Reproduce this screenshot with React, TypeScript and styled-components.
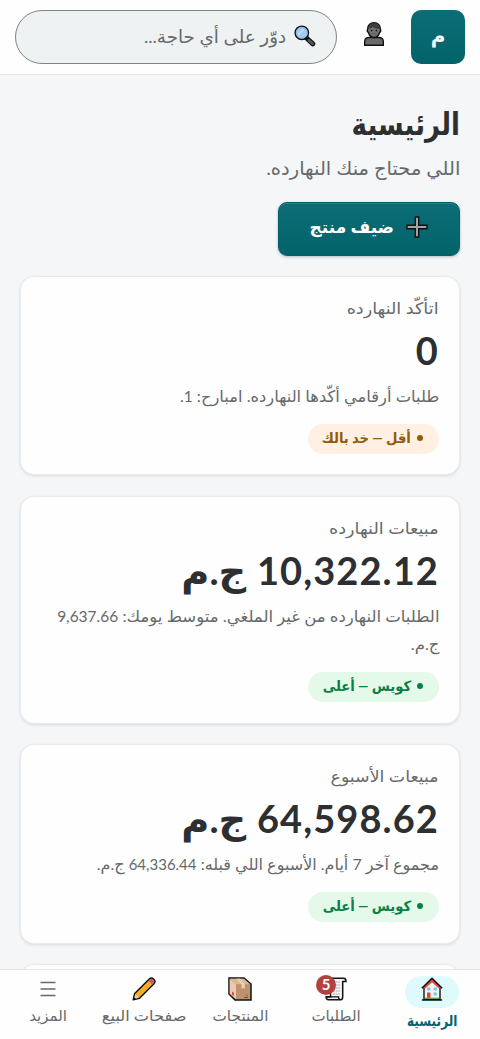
import React from "react";
import styled, { createGlobalStyle } from "styled-components";

const Global = createGlobalStyle`
  * { box-sizing: border-box; }
  html, body { margin: 0; height: 100%; overflow: hidden; }
  body { background: #f4f6f8; font-family: Lato, "DejaVu Sans", sans-serif; color: #2d2f31; }
  svg { flex: none; }
`;

const Page = styled.div`
  height: 1039px;
  display: flex;
  flex-direction: column;
  overflow: hidden;
  background: #f4f6f8;
`;

const Text = styled.span<{ $fit?: number; $origin?: string }>`
  display: inline-block;
  vertical-align: top;
  white-space: nowrap;
  transform: scaleX(${(p) => p.$fit ?? 1});
  transform-origin: ${(p) => p.$origin ?? "right"} center;
`;

const Header = styled.header`
  flex: none;
  height: 75px;
  padding: 10px 15px;
  display: flex;
  gap: 10px;
  background: #fefefe;
  border-bottom: 1px solid #e2e6e8;
`;

const Avatar = styled.div`
  width: 54px;
  height: 54px;
  padding-bottom: 3px;
  border-radius: 10px;
  display: grid;
  place-items: center;
  color: #fff;
  font-size: 20px;
  font-weight: 700;
  background: linear-gradient(#0c6d76, #03636b);
`;

const IconButton = styled.button`
  width: 54px;
  height: 54px;
  padding: 0 0 6px;
  border: 0;
  background: none;
  display: grid;
  place-items: center;
`;

const Search = styled.div`
  flex: 1;
  height: 54px;
  border: 1px solid #7f8485;
  border-radius: 27px;
  background: #eff2f2;
  padding: 0 20px 3px;
  display: flex;
  align-items: center;
  gap: 8px;
  color: #66696b;
  font-size: 18px;
`;

const Main = styled.main`
  flex: 1;
  min-height: 0;
  overflow: hidden;
  padding: 26px 20px 0;
  display: flex;
  flex-direction: column;
  align-items: flex-start;
`;

const Title = styled.h1`
  margin: 0;
  height: 44px;
  line-height: 44px;
  font-size: 31px;
  font-weight: 700;
`;

const Subtitle = styled.p`
  margin: 7px 0 0;
  height: 30px;
  line-height: 31px;
  font-size: 19px;
  color: #66696b;
`;

const AddButton = styled.button`
  flex: none;
  margin: 20px 0 20px;
  width: 182px;
  height: 54px;
  padding: 0 31px 5px;
  border: 1px solid #055f67;
  border-radius: 9px;
  display: flex;
  align-items: center;
  gap: 12px;
  color: #fff;
  font: 700 17px Lato, "DejaVu Sans", sans-serif;
  background: linear-gradient(#0c6d76, #03636b);
  box-shadow: 0 1px 3px rgba(20, 50, 80, 0.3), inset 0 1px 0 rgba(255, 255, 255, 0.13);
`;

const Cards = styled.div`
  width: 100%;
  display: flex;
  flex-direction: column;
  gap: 20.5px;
`;

const Card = styled.section<{ $height: number }>`
  flex: none;
  height: ${(p) => p.$height}px;
  padding: 17px 20px 0;
  border: 1px solid #e8ebed;
  border-radius: 14px;
  background: #fefefe;
  box-shadow: 0 1px 3px rgba(30, 40, 50, 0.12);
`;

const Label = styled.div`
  height: 28px;
  line-height: 28px;
  font-size: 16px;
  color: #66696b;
`;

const Value = styled.div`
  height: 60px;
  line-height: 57px;
  font-size: 38px;
  font-weight: 700;
  display: flex;
  gap: 10.5px;
`;

const Digits = styled.span`
  letter-spacing: 1.1px;
`;

const Detail = styled.div<{ $lines?: number }>`
  height: ${(p) => (p.$lines ?? 1) * 28.5}px;
  line-height: 28.5px;
  font-size: 16px;
  color: #66696b;
`;

const Num = styled.span`
  font-size: 15px;
  line-height: 1;
`;

const Badge = styled.div<{ $tone: "good" | "warn" }>`
  margin-top: 13px;
  width: 131px;
  height: 30px;
  border-radius: 15px;
  padding: 0 16px 3px;
  display: flex;
  align-items: center;
  gap: 6px;
  font-size: 14px;
  font-weight: 700;
  color: ${(p) => (p.$tone === "good" ? "#087f45" : "#925b05")};
  background: ${(p) => (p.$tone === "good" ? "#e5f9ea" : "#fff0e3")};
`;

const Dot = styled.i`
  flex: none;
  width: 6px;
  height: 6px;
  margin-top: 2px;
  border-radius: 50%;
  background: currentColor;
`;

const Nav = styled.nav`
  flex: none;
  height: 70px;
  display: grid;
  grid-template-columns: repeat(5, 96px);
  background: #fefefe;
  border-top: 1px solid #e2e5e7;
`;

const NavItem = styled.a<{ $active?: boolean }>`
  display: flex;
  flex-direction: column;
  align-items: center;
  padding-top: ${(p) => (p.$active ? 6 : 4)}px;
  line-height: 24px;
  font-size: 15px;
  font-weight: ${(p) => (p.$active ? 700 : 400)};
  color: ${(p) => (p.$active ? "#05636d" : "#66696b")};
`;

const NavIcon = styled.span<{ $active?: boolean }>`
  position: relative;
  width: 54px;
  height: ${(p) => (p.$active ? 32 : 29)}px;
  padding-bottom: ${(p) => (p.$active ? 6 : 0)}px;
  border-radius: 16px;
  display: grid;
  place-items: center;
  background: ${(p) => (p.$active ? "#dffafd" : "none")};
`;

const Count = styled.b`
  position: absolute;
  left: 7px;
  top: 1px;
  width: 20px;
  height: 20px;
  border-radius: 50%;
  background: #b1423e;
  color: #fff;
  font-size: 15px;
  line-height: 18px;
  text-align: center;
`;

const SearchIcon = () => (
  <svg width="22" height="22" viewBox="0 0 22 22">
    <path d="M12.500 13 18.800 18.800" stroke="#111" strokeWidth="5" strokeLinecap="round" />
    <path d="M14.800 15.200 18.600 18.700" stroke="#4f5d5d" strokeWidth="2.600" strokeLinecap="round" />
    <circle cx="7.800" cy="7.800" r="6.700" fill="#a3cbf5" stroke="#111" strokeWidth="1.400" />
    <circle cx="7.800" cy="7.800" r="5.400" fill="none" stroke="#7fb0e6" strokeWidth=".8" />
    <path d="M4.500 9.500 9.500 4.500" stroke="#c9e2fa" strokeWidth="1.500" />
  </svg>
);

const PersonIcon = () => (
  <svg width="22" height="26" viewBox="0 0 22 26">
    <path d="M1.700 24.300V20.500c0-2.600 1.800-4 4.500-4h9.600c2.700 0 4.500 1.400 4.500 4v3.800Z" fill="#6b6b6b" stroke="#111" strokeWidth="1.400" />
    <path d="M4.600 8C4.600 4.200 7.200 1.800 11 1.800s6.400 2.400 6.400 6.200c0 1 .7 1.400.2 2.400-.2.500-.8.600-1 1.100-.8 2.800-3 5-5.600 5s-4.800-2.200-5.600-5c-.2-.5-.8-.6-1-1.100-.5-1 .2-1.400.2-2.400Z" fill="#707070" stroke="#111" strokeWidth="1.400" />
    <path d="M5 7.800C5 4.400 7.600 2.500 11 2.500s6 1.900 6 5.300c-3 .3-5.400-.4-7.100-2C8.800 7 7 7.800 5 7.800Z" fill="#3d3d3d" />
    <circle cx="8.600" cy="9.600" r=".8" fill="#111" />
    <circle cx="13.400" cy="9.600" r=".8" fill="#111" />
    <path d="M9.500 13h3" stroke="#555" strokeWidth=".7" />
  </svg>
);

const PlusIcon = () => (
  <svg width="22" height="22" viewBox="0 0 22 22">
    <path d="M9.300 1h3.400v8.300H21v3.400h-8.300V21H9.300v-8.300H1V9.300h8.300Z" fill="#a5a3a2" stroke="#111" strokeWidth="1.400" />
  </svg>
);

const HouseIcon = () => (
  <svg width="22" height="24" viewBox="0 0 22 24">
    <path d="M3 10 11 3l8 7v12.500H3Z" fill="#f8f8f8" stroke="#111" strokeWidth="1.400" />
    <path d="M2.800 11 11 3.600l8.200 7.400" fill="none" stroke="#de4a35" strokeWidth="2.600" />
    <path d="M.8 11.300 11 1.200l10.200 10.100" fill="none" stroke="#111" strokeWidth="1.500" />
    <path d="M6 10.500h3.500v3H6Zm6.500 0H16v3h-3.500Zm0 5H16v3h-3.500Z" fill="#7bc9ee" />
    <path d="M6 15.500h3.500v6.500H6Z" fill="#e24335" />
    <path d="M3.700 21.300h14.600" stroke="#58a946" strokeWidth="1.400" />
    <path d="M.8 23h20.400" stroke="#111" strokeWidth="1.400" />
  </svg>
);

const OrdersIcon = () => (
  <svg width="22" height="24" viewBox="0 0 22 24">
    <path d="M5.500 1.200h13.300c1.600 0 2.200 1 2.200 3.300h-3.300v15.300c0 2-.7 3-2 3H3.700c-1.800 0-2.600-1-2.600-3h4.400Z" fill="#f3f3f3" stroke="#111" strokeWidth="1.500" />
    <path d="M1.500 19.800h12c0 1.800.6 2.800 1.800 2.800" fill="none" stroke="#111" strokeWidth="1.300" />
    <path d="M8 5h7M8 8h7m-7 3h7m-7 3h7m-7 3h7" stroke="#a7a9ad" strokeDasharray="2 .7" />
  </svg>
);

const BoxIcon = () => (
  <svg width="24" height="24" viewBox="0 0 24 24">
    <path d="M1 1h15l7 6v16H7l-6-6Z" fill="#c39a76" stroke="#111" strokeWidth="1.500" />
    <path d="M1.700 1.700h14l6.300 5.600H8Z" fill="#dcb896" />
    <path d="M1.700 2 8 7.600v14.100l-6.300-5Z" fill="#e9cbb4" />
    <path d="M8 7.500h14V22H8Z" fill="#bd926c" />
    <path d="m8.500 1.700 5 5.600v4.500l1.700-.8 1.600.8V7.300L12 1.700Z" fill="#ecd0b0" />
    <path d="m4 14.500 2 1.500v3l-2-1.500Z" fill="#e33f4f" />
    <path d="M16 20.500h4m-2-3 1.500 1.500" stroke="#684f3b" />
  </svg>
);

const PencilIcon = () => (
  <svg width="24" height="24" viewBox="0 0 24 24">
    <path d="M1.200 22.800 2.700 16.500 17.300 2c1.500-1.500 3-1.300 4.500.2s1.600 3 .2 4.500L7.500 21.200Z" fill="#f5ae22" stroke="#111" strokeWidth="1.500" strokeLinejoin="round" />
    <path d="m16.600 3.900 1.500-1.400c1.100-1 2-.8 3.100.3s1.300 2.100.3 3.100l-1.400 1.500Z" fill="#d2557f" />
    <path d="m3.300 17 3.700 3.700-4.900 1.300Z" fill="#ead1ae" />
    <path d="m1.200 22.800.7-2.800 2.100 2.100Z" fill="#111" />
  </svg>
);

const MenuIcon = () => (
  <svg width="18" height="18" viewBox="0 0 18 18">
    <path d="M1.500 2.500h15M1.500 9h15m-15 6.500h15" stroke="#66696b" strokeWidth="1.500" />
  </svg>
);

export default function App() {
  return (
    <Page dir="rtl" lang="ar">
      <Global />
      <Header>
        <Avatar>م</Avatar>
        <IconButton aria-label="الحساب"><PersonIcon /></IconButton>
        <Search><SearchIcon /><Text $fit={1.015}>دوّر على أي حاجة...</Text></Search>
      </Header>
      <Main>
        <Title><Text $fit={0.84}>الرئيسية</Text></Title>
        <Subtitle><Text $fit={1.025}>اللي محتاج منك النهارده.</Text></Subtitle>
        <AddButton><PlusIcon /><Text>ضيف منتج</Text></AddButton>
        <Cards>
          <Card $height={199}>
            <Label><Text $fit={1.1}>اتأكّد النهارده</Text></Label>
            <Value><Digits>0</Digits></Value>
            <Detail><Text $fit={1.02}>طلبات أرقامي أكّدها النهارده. امبارح: <Num>1</Num>.</Text></Detail>
            <Badge $tone="warn"><Dot /><Text $fit={0.94}>أقل — خد بالك</Text></Badge>
          </Card>
          <Card $height={228}>
            <Label><Text $fit={1.1}>مبيعات النهارده</Text></Label>
            <Value><Digits>10,322.12</Digits><Text $fit={1.01}>ج.م</Text></Value>
            <Detail $lines={2}><Text $fit={1.032}>الطلبات النهارده من غير الملغي. متوسط يومك: <Num>9,637.66</Num><br />ج.م.</Text></Detail>
            <Badge $tone="good"><Dot /><Text $fit={0.94}>كويس — أعلى</Text></Badge>
          </Card>
          <Card $height={199.5}>
            <Label><Text $fit={1.085}>مبيعات الأسبوع</Text></Label>
            <Value><Digits>64,598.62</Digits><Text $fit={1.01}>ج.م</Text></Value>
            <Detail><Text>مجموع آخر 7 أيام. الأسبوع اللي قبله: <Num>64,336.44</Num> ج.م.</Text></Detail>
            <Badge $tone="good"><Dot /><Text $fit={0.94}>كويس — أعلى</Text></Badge>
          </Card>
          <Card $height={199} />
        </Cards>
      </Main>
      <Nav>
        <NavItem $active><NavIcon $active><HouseIcon /></NavIcon><Text $origin="center" $fit={0.81}>الرئيسية</Text></NavItem>
        <NavItem><NavIcon><OrdersIcon /><Count>5</Count></NavIcon><Text $origin="center">الطلبات</Text></NavItem>
        <NavItem><NavIcon><BoxIcon /></NavIcon><Text $origin="center" $fit={1.02}>المنتجات</Text></NavItem>
        <NavItem><NavIcon><PencilIcon /></NavIcon><Text $origin="center" $fit={1.08}>صفحات البيع</Text></NavItem>
        <NavItem><NavIcon><MenuIcon /></NavIcon><Text $origin="center">المزيد</Text></NavItem>
      </Nav>
    </Page>
  );
}
